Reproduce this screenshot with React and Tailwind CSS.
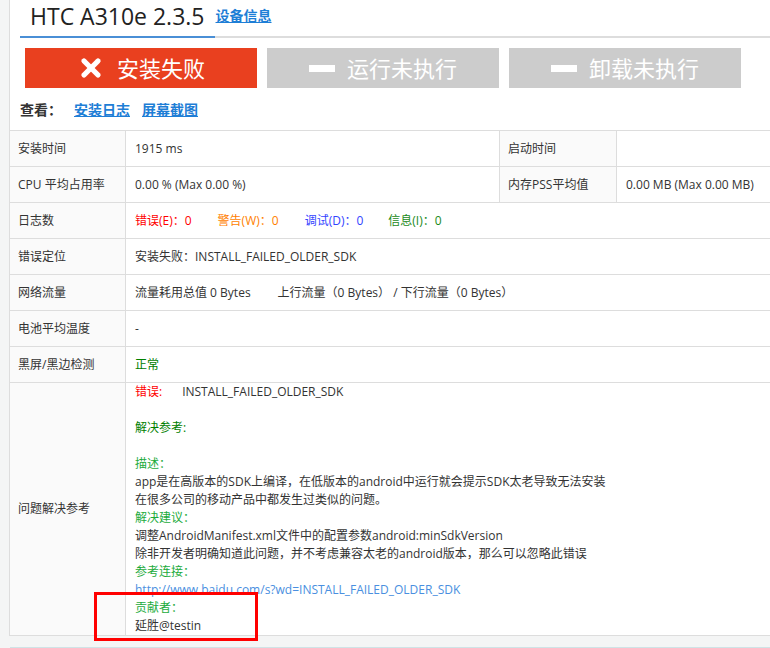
import { X } from "lucide-react";

const font = { fontFamily: '"Open Sans", "Noto Sans CJK SC", sans-serif' };

const Label = ({ children, className = "" }) => (
  <td className={`w-[116px] border border-[#dddddd] bg-[#fafafa] pl-[8px] align-middle text-[#333] ${className}`}>
    {children}
  </td>
);

const Cell = ({ children, colSpan, className = "" }) => (
  <td colSpan={colSpan} className={`border border-[#dddddd] pl-[9px] align-middle text-[#333] ${className}`}>
    {children}
  </td>
);

const ActionButton = ({ failed, children }) => (
  <div
    className={`flex h-[40px] w-[232px] items-center justify-center gap-[12px] text-[22px] text-white ${
      failed ? "bg-[#e9401f]" : "bg-[#cccccc]"
    }`}>
    {failed ? (
      <X className="h-[28px] w-[28px]" strokeWidth={4.5} />
    ) : (
      <span className="block h-[7px] w-[26px] bg-white" />
    )}
    <span>{children}</span>
  </div>
);

export default function App() {
  return (
    <div className="relative h-[648px] w-[770px] overflow-hidden bg-[#f4f5f5]" style={font}>
      <div className="ml-[9px] border-l border-[#dddddd] bg-white">
        {/* header */}
        <div className="pl-[10px]">
          <div className="flex items-end border-b-2 border-[#dddddd]">
            <div className="-mb-[2px] border-b-2 border-[#4a8fd6] px-[10px] pb-[4px] text-[23px] leading-[32px] text-[#222]">
              HTC A310e 2.3.5
            </div>
            <a className="mb-[10px] ml-[1px] text-[14px] font-bold text-[#1e7ed6] underline">设备信息</a>
          </div>

          <div className="ml-[5px] mt-[10px] flex gap-[10px]">
            <ActionButton failed>安装失败</ActionButton>
            <ActionButton>运行未执行</ActionButton>
            <ActionButton>卸载未执行</ActionButton>
          </div>

          <div className="flex h-[42px] items-center text-[14px] font-bold">
            <span className="text-[#333]">查看：</span>
            <a className="ml-[12px] text-[#1e7ed6] underline">安装日志</a>
            <a className="ml-[12px] text-[#1e7ed6] underline">屏幕截图</a>
          </div>
        </div>

        {/* detail table */}
        <table className="-ml-px w-[780px] border-collapse text-[12px]">
          <tbody>
            <tr className="h-[36px]">
              <Label>安装时间</Label>
              <Cell className="w-[374px]">1915 ms</Cell>
              <Label className="w-[117px]">启动时间</Label>
              <Cell></Cell>
            </tr>
            <tr className="h-[36px]">
              <Label>CPU 平均占用率</Label>
              <Cell>0.00 % (Max 0.00 %)</Cell>
              <Label>内存PSS平均值</Label>
              <Cell>0.00 MB (Max 0.00 MB)</Cell>
            </tr>
            <tr className="h-[36px]">
              <Label>日志数</Label>
              <Cell colSpan={3}>
                <span className="text-[#ff0000]">错误(E)：0</span>
                <span className="ml-[26px] text-[#ff7f00]">警告(W)：0</span>
                <span className="ml-[26px] text-[#3344ff]">调试(D)：0</span>
                <span className="ml-[25px] text-[#1a8a1a]">信息(I)：0</span>
              </Cell>
            </tr>
            <tr className="h-[36px]">
              <Label>错误定位</Label>
              <Cell colSpan={3}>安装失败：INSTALL_FAILED_OLDER_SDK</Cell>
            </tr>
            <tr className="h-[36px]">
              <Label>网络流量</Label>
              <Cell colSpan={3}>
                流量耗用总值 0 Bytes
                <span className="ml-[27px]">上行流量（0 Bytes） / 下行流量（0 Bytes）</span>
              </Cell>
            </tr>
            <tr className="h-[36px]">
              <Label>电池平均温度</Label>
              <Cell colSpan={3}>-</Cell>
            </tr>
            <tr className="h-[36px]">
              <Label>黑屏/黑边检测</Label>
              <Cell colSpan={3}>
                <span className="text-[#008000]">正常</span>
              </Cell>
            </tr>
            <tr>
              <Label>问题解决参考</Label>
              <Cell colSpan={3}>
                <div className="leading-[18px]">
                  <div>
                    <span className="text-[#ff0000]">错误:</span>
                    <span className="ml-[20px]">INSTALL_FAILED_OLDER_SDK</span>
                  </div>
                  <div className="h-[18px]" />
                  <div className="text-[#008000]">解决参考:</div>
                  <div className="h-[18px]" />
                  <div className="text-[#1cab3c]">描述：</div>
                  <div>app是在高版本的SDK上编译，在低版本的android中运行就会提示SDK太老导致无法安装</div>
                  <div>在很多公司的移动产品中都发生过类似的问题。</div>
                  <div className="text-[#1cab3c]">解决建议：</div>
                  <div>调整AndroidManifest.xml文件中的配置参数android:minSdkVersion</div>
                  <div>除非开发者明确知道此问题，并不考虑兼容太老的android版本，那么可以忽略此错误</div>
                  <div className="text-[#1cab3c]">参考连接：</div>
                  <a className="block text-[#4a8fe0]">http://www.baidu.com/s?wd=INSTALL_FAILED_OLDER_SDK</a>
                  <div className="text-[#1cab3c]">贡献者：</div>
                  <div>延胜@testin</div>
                </div>
              </Cell>
            </tr>
          </tbody>
        </table>
      </div>
      <div className="absolute bottom-0 left-[10px] right-0 h-px bg-[#cfe3e6]" />

      {/* highlight box */}
      <div className="absolute left-[94px] top-[592px] h-[49px] w-[164px] border-[3px] border-[#ff0000]" />
    </div>
  );
}
